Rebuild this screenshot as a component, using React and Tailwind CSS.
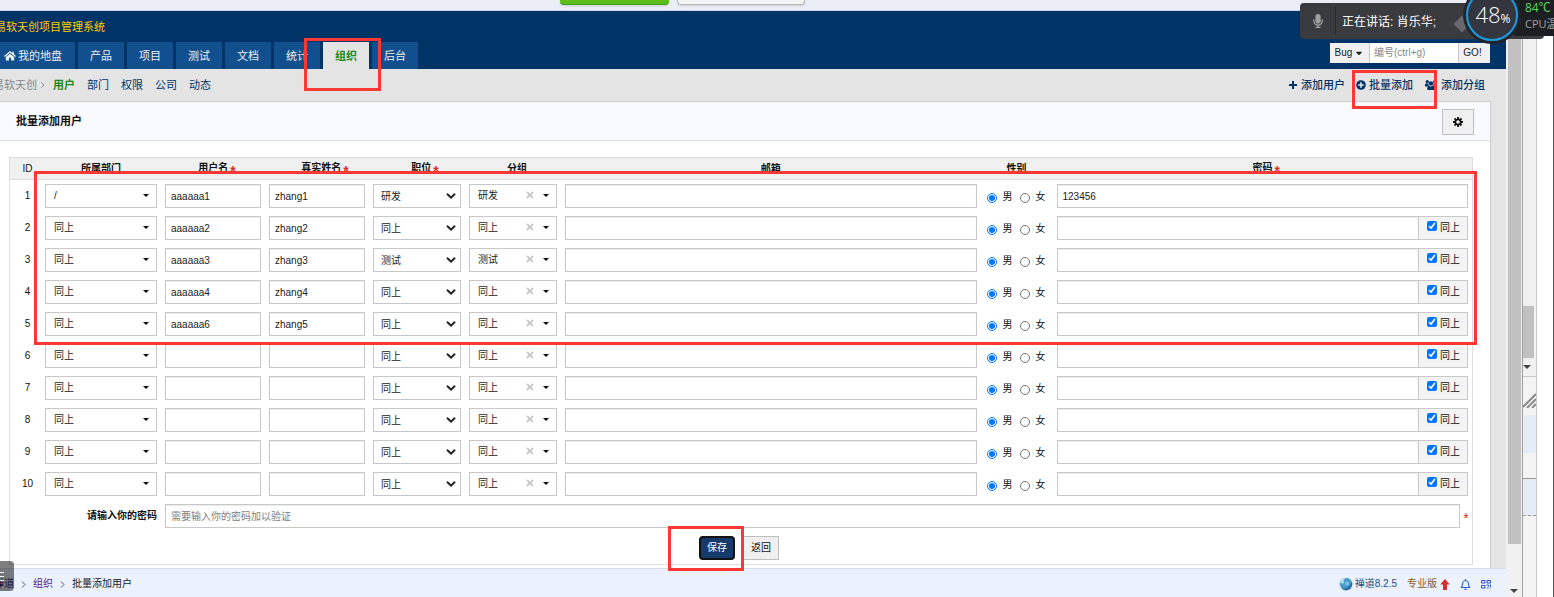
import React from 'react';
import { FaTimes, FaMicrophone, FaRegBell, FaCaretDown } from 'react-icons/fa';

const fontClass = "font-['Liberation_Sans','Noto_Sans_CJK_SC',sans-serif]";

const rows = [
  { id: 1, dept: '/', user: 'aaaaaa1', name: 'zhang1', role: '研发', group: '研发', password: '123456' },
  { id: 2, dept: '同上', user: 'aaaaaa2', name: 'zhang2', role: '同上', group: '同上' },
  { id: 3, dept: '同上', user: 'aaaaaa3', name: 'zhang3', role: '测试', group: '测试' },
  { id: 4, dept: '同上', user: 'aaaaaa4', name: 'zhang4', role: '同上', group: '同上' },
  { id: 5, dept: '同上', user: 'aaaaaa6', name: 'zhang5', role: '同上', group: '同上' },
  { id: 6, dept: '同上', user: '', name: '', role: '同上', group: '同上' },
  { id: 7, dept: '同上', user: '', name: '', role: '同上', group: '同上' },
  { id: 8, dept: '同上', user: '', name: '', role: '同上', group: '同上' },
  { id: 9, dept: '同上', user: '', name: '', role: '同上', group: '同上' },
  { id: 10, dept: '同上', user: '', name: '', role: '同上', group: '同上' },
];

const columns = [
  { label: 'ID', width: 'w-[31px] pl-1 font-normal' },
  { label: '所属部门', width: 'w-[120px] font-bold' },
  { label: '用户名', width: 'w-[104px] pl-2 font-bold', required: true },
  { label: '真实姓名', width: 'w-[104px] pl-4 font-bold', required: true },
  { label: '职位', width: 'w-[96px] pl-4 font-bold', required: true },
  { label: '分组', width: 'w-[96px] pl-2 font-bold' },
  { label: '邮箱', width: 'font-bold' },
  { label: '性别', width: 'w-[72px] font-bold' },
  { label: '密码', width: 'pl-2 font-bold', required: true },
];

const fieldClass =
  'block h-6 w-full min-w-0 border border-[#c8c8c8] bg-white px-[5px] text-[10px] leading-4 text-[#222] shadow-[inset_0_1px_1px_rgba(0,0,0,0.08)] outline-none placeholder:text-[#808080]';
const selectClass =
  'block h-6 w-full appearance-none border border-[#c8c8c8] bg-white text-[10px] leading-4 text-[#222] outline-none';

function Star() {
  return <span className="ml-0.5 inline-block pt-1 align-middle text-[14px] font-bold leading-3 text-[#d2322d]">*</span>;
}

function Caret() {
  return (
    <svg viewBox="0 0 6 3" className="h-[3px] w-1.5" fill="#111" aria-hidden="true">
      <path d="M0 0h6L3 3z" />
    </svg>
  );
}

function HomeIcon() {
  return (
    <svg viewBox="0 0 12 10" className="h-2.5 w-3" fill="currentColor" aria-hidden="true">
      <path d="M6 0 0 5l.8 1L6 1.800 11.200 6l.8-1-2-1.700V.8H8.500v1.300z" />
      <path d="M6 2.700 1.800 6v3.600h3.200V6.800h2v2.800h3.200V6z" />
    </svg>
  );
}

function PlusIcon() {
  return (
    <svg viewBox="0 0 8 8" className="size-2" stroke="currentColor" strokeWidth="2" aria-hidden="true">
      <path d="M4 0v8M0 4h8" />
    </svg>
  );
}

function PlusCircleIcon() {
  return (
    <svg viewBox="0 0 10 10" className="-mx-px size-[10px]" fill="none" aria-hidden="true">
      <circle cx="5" cy="5" r="4.800" fill="currentColor" />
      <path d="M5 2.200v5.600M2.200 5h5.600" stroke="#e4e4e4" strokeWidth="1.600" />
    </svg>
  );
}

function GroupIcon() {
  return (
    <svg viewBox="0 0 12 10" className="h-2.5 w-3" fill="currentColor" aria-hidden="true">
      <circle cx="2.300" cy="1.700" r="1.600" />
      <circle cx="9.700" cy="1.700" r="1.600" />
      <circle cx="6" cy="3.400" r="2.200" />
      <path d="M0 6V4.500Q0 3.400 1 3.400h2.300q0 1.500.9 2.200-1 .1-1.600.9H.8Q0 6.500 0 6zM12 6V4.500q0-1.100-1-1.100H8.700q0 1.500-.9 2.200 1 .1 1.600.9h1.800q.8 0 .8-.5z" />
      <path d="M2.200 8.800c0-2 .7-3 1.900-3 1.200.9 2.600.9 3.800 0 1.200 0 1.900 1 1.900 3 0 .8-.5 1.200-1.200 1.200H3.400c-.7 0-1.200-.4-1.200-1.200z" />
    </svg>
  );
}

function GearIcon() {
  return (
    <svg viewBox="0 0 10 10" className="size-[10px]" fill="none" stroke="#111" aria-hidden="true">
      <circle cx="5" cy="5" r="2.700" strokeWidth="1.800" />
      <path d="M5 0v2M5 8v2M0 5h2M8 5h2M1.500 1.500l1.300 1.300M7.200 7.200l1.300 1.300M8.500 1.500 7.200 2.800M2.800 7.200 1.500 8.500" strokeWidth="1.800" />
    </svg>
  );
}

function PickSelect({ label, value, clearable }) {
  return (
    <div className="relative">
      <select aria-label={label} defaultValue={value} className={selectClass + ' pl-2'}>
        <option>{value}</option>
      </select>
      <span className="pointer-events-none absolute right-2 top-0 flex h-[22px] items-center gap-2">
        {clearable && <FaTimes className="size-[10px] text-[#c4c4c4]" />}
        <Caret />
      </span>
    </div>
  );
}

function RoleSelect({ label, value }) {
  return (
    <div className="relative">
      <select aria-label={label} defaultValue={value} className={selectClass + ' pl-[7px] pt-px'}>
        <option>{value}</option>
      </select>
      <svg viewBox="0 0 10 6" className="pointer-events-none absolute right-[5px] top-[9px] h-1.5 w-2.5" fill="none" stroke="#222" strokeWidth="2" aria-hidden="true">
        <path d="M1 0.8 5 4.600 9 0.8" />
      </svg>
    </div>
  );
}

function UserRow({ row }) {
  return (
    <tr className="h-8">
      <td className="p-0 pl-1 text-center">{row.id}</td>
      <td className="p-1"><PickSelect label={'所属部门 ' + row.id} value={row.dept} /></td>
      <td className="p-1"><input aria-label={'用户名 ' + row.id} defaultValue={row.user} className={fieldClass} /></td>
      <td className="p-1"><input aria-label={'真实姓名 ' + row.id} defaultValue={row.name} className={fieldClass} /></td>
      <td className="p-1"><RoleSelect label={'职位 ' + row.id} value={row.role} /></td>
      <td className="p-1"><PickSelect label={'分组 ' + row.id} value={row.group} clearable /></td>
      <td className="p-1"><input type="email" aria-label={'邮箱 ' + row.id} className={fieldClass} /></td>
      <td className="p-0">
        <div className="flex h-6 items-center gap-[7px] pl-1.5 pt-0.5">
          <label className="flex items-center gap-1.5">
            <input type="radio" name={'gender' + row.id} defaultChecked className="mt-0.5 size-[10px]" />男
          </label>
          <label className="flex items-center gap-1.5">
            <input type="radio" name={'gender' + row.id} className="mt-0.5 size-[10px]" />女
          </label>
        </div>
      </td>
      <td className="p-1">
        <div className="flex">
          <input aria-label={'密码 ' + row.id} defaultValue={row.password || ''} className={fieldClass + ' flex-1'} />
          {row.id > 1 && (
            <label className="-ml-px flex h-6 w-[50px] shrink-0 items-center gap-[3px] border border-[#c8c8c8] bg-[#f4f4f4] pl-2">
              <input type="checkbox" defaultChecked className="mb-1 size-[10px]" />同上
            </label>
          )}
        </div>
      </td>
    </tr>
  );
}

function MainNav() {
  const tabs = ['产品', '项目', '测试', '文档', '统计', '组织', '后台'];
  return (
    <nav className="flex gap-[3px]">
      <a href="#my" className="flex h-[27px] w-[75px] items-center gap-0.5 bg-[#124f8e] pl-1 text-[#eee]">
        <HomeIcon />我的地盘
      </a>
      {tabs.map((tab) => (
        <a
          key={tab}
          href={'#' + tab}
          className={
            'flex h-[27px] items-center px-3 ' +
            (tab === '组织' ? 'bg-[#e4e4e4] font-bold text-[#1d8a1d]' : 'bg-[#124f8e] text-[#eee]')
          }
        >
          {tab}
        </a>
      ))}
    </nav>
  );
}

function SearchBox() {
  return (
    <form className="mb-1.5 mr-4 flex h-5 text-[10px] text-[#222]">
      <button type="button" className="flex w-10 items-center justify-center gap-0.5 border-r border-[#c8c8c8] bg-[#f0f0f0]">
        Bug<FaCaretDown className="size-2.5" />
      </button>
      <input aria-label="编号" placeholder="编号(ctrl+g)" className="w-[88px] bg-white px-1 outline-none placeholder:text-[#888]" />
      <button type="button" className="w-8 border-l border-[#c8c8c8] bg-[#f0f0f0] pr-1">GO!</button>
    </form>
  );
}

function SubNav() {
  return (
    <div className="flex h-8 items-center justify-between text-[11px] text-[#036]">
      <nav className="flex items-center gap-3">
        <span className="-ml-[7px] flex items-center gap-1 text-[#888]">
          易软天创
          <svg viewBox="0 0 4 6" className="h-1.5 w-1" fill="none" stroke="#888" aria-hidden="true"><path d="M.5.5 3 3 .5 5.500" /></svg>
        </span>
        <a href="#user" className="-ml-1 font-bold text-[#1d8a1d]">用户</a>
        <a href="#dept">部门</a>
        <a href="#priv">权限</a>
        <a href="#company">公司</a>
        <a href="#dynamic">动态</a>
      </nav>
      <div className="mr-[21px] flex items-center gap-3 font-medium">
        <a href="#add" className="flex items-center gap-1"><PlusIcon />添加用户</a>
        <a href="#batch" className="flex items-center gap-1"><PlusCircleIcon />批量添加</a>
        <a href="#group" className="flex items-center gap-1"><GroupIcon />添加分组</a>
      </div>
    </div>
  );
}

function Separator() {
  return (
    <svg viewBox="0 0 5 7" className="h-[7px] w-[5px]" fill="none" stroke="#555" aria-hidden="true"><path d="M1 .5 4 3.500 1 6.500" /></svg>
  );
}

function Footer() {
  return (
    <footer className="flex h-[29px] items-center justify-between border-t border-[#d8dde6] bg-[#ebf2fd] pt-0.5 text-[10px]">
      <nav className="flex items-center gap-[7px] text-[#222]">
        <a href="#zentao" className="-ml-1.5 text-[#3a1a6e]">禅道</a>
        <Separator />
        <a href="#org" className="text-[#551a8b]">组织</a>
        <Separator />
        <span>批量添加用户</span>
      </nav>
      <div className="mr-[15px] flex items-center gap-2.5 text-[#1a4f85]">
        <a href="#about" className="flex items-center gap-0.5">
          <svg viewBox="0 0 14 14" className="size-3.5" aria-hidden="true">
            <circle cx="7" cy="7" r="6.300" fill="#4a9bcb" />
            <path d="M1 5C2 2 5 .7 7.500.8 5 2 4 4 5 6c-1 1-3 .6-4-1z" fill="#b5dff0" />
            <path d="M3 11.500c4 .5 7-1.500 9.800-6.500 1.500 4-1.300 8.300-5.800 8.300-1.500 0-3-.8-4-1.800z" fill="#2671a8" />
            <circle cx="8" cy="6.500" r="2" fill="#7cc3e2" />
          </svg>
          禅道8.2.5
        </a>
        <a href="#pro" className="flex items-center gap-[3px] text-[#8a5a1c]">
          专业版
          <svg viewBox="0 0 10 11" className="h-[11px] w-2.5" fill="#d2322d" aria-hidden="true"><path d="M5 0 9.800 5.500H7V11H3V5.500H.2z" /></svg>
        </a>
        <button type="button" aria-label="通知"><FaRegBell className="size-[11px] text-[#2f5bd0]" /></button>
        <button type="button" aria-label="二维码">
          <svg viewBox="0 0 10 10" className="size-[10px]" fill="none" stroke="#2f4fd0" aria-hidden="true">
            <path d="M.5 1.500h3.500v2.500H.5zM6 1.500h3.500v2.500H6zM.5 6.500h3.500V9H.5zM5.500 6h2v1.500M9.500 5.500v2.500M6 9h1.500M8.500 9h1" />
          </svg>
        </button>
      </div>
    </footer>
  );
}

function DownArrow() {
  return <svg viewBox="0 0 8 4" className="h-1 w-2" fill="#444" aria-hidden="true"><path d="M0 0h8L4 4z" /></svg>;
}

function OuterStrip() {
  return (
    <div className="flex w-8 shrink-0 border-r border-[#555] bg-white">
      <div className="flex w-[15px] flex-col border-l border-r border-l-[#a0a0a0] border-r-[#c8c8c8] bg-[#f4f4f4]">
        <div className="h-[295px] bg-[#f1f1f1]" />
        <div className="mr-0.5 h-[52px] bg-[#c1c1c1]" />
        <div className="flex h-[18px] items-center bg-[#f1f1f1]"><DownArrow /></div>
        <div className="flex h-[39px] items-center border-t border-[#c8c8c8]">
          <svg viewBox="0 0 13 15" className="mt-2 h-[15px] w-[13px]" stroke="#8a8a8a" strokeWidth="2" aria-hidden="true">
            <path d="M0 14 13 1M4 15l9-9M9 15l4-4" />
          </svg>
        </div>
        <div className="h-[38px] bg-[#e3ecf7]" />
        <div className="h-[26px] border-b border-[#999]" />
        <div className="h-[37px] border-b border-dashed border-[#999] bg-[#e3ecf7]" />
      </div>
    </div>
  );
}

function MeetingWidget() {
  return (
    <div className="absolute right-0 top-0 h-[45px] w-[254px] overflow-hidden">
      <div className="absolute left-0 right-2.5 top-[3px] flex h-9 items-center rounded bg-[#3a3b3f] text-white">
        <span className="flex h-7 w-9 items-center justify-center border-r border-[#28292c]">
          <FaMicrophone className="size-3.5 text-[#a0a0a0]" />
        </span>
        <span className="pl-1.5 pt-0.5 text-[12px]">正在讲话: 肖乐华;</span>
      </div>
      <span className="absolute left-[156px] top-[18px] size-3 rotate-45 bg-[#66686c]" />
      <div className="absolute right-0 top-0 flex h-9 w-10 flex-col justify-between overflow-hidden bg-[#1d1e22] pb-1 pl-[11px] text-[12px] leading-4">
        <span className="whitespace-nowrap font-['Open_Sans','Noto_Sans_CJK_SC',sans-serif] text-[#5ad65a]">84℃</span>
        <span className="whitespace-nowrap font-['Open_Sans','Noto_Sans_CJK_SC',sans-serif] text-[11px] text-[#a0a0a0]">CPU温</span>
      </div>
      <svg viewBox="0 0 60 45" className="absolute left-[162px] top-0 h-[45px] w-[60px]" aria-hidden="true">
        <circle cx="30" cy="15" r="29" fill="#22242c" />
        <circle cx="30" cy="15" r="25" fill="#34363f" stroke="#1e9be0" strokeWidth="2" />
      </svg>
      <div className="absolute left-[169px] top-0.5 flex w-12 items-baseline justify-center font-['Open_Sans',sans-serif] text-[22px] font-light leading-6 text-white">
        48<span className="text-[12px] font-normal">%</span>
      </div>
    </div>
  );
}

export default function App() {
  return (
    <div className={'relative flex min-h-screen flex-col overflow-hidden bg-[#e4e4e4] text-[11px] leading-4 text-[#111] ' + fontClass}>
      <div className="flex h-[11px] items-start gap-2 overflow-hidden border-b border-[#d0d8e4] bg-[#ebeef7] pl-[560px]">
        <div className="h-[5px] w-[109px] rounded-b border-b border-[#3f9e14] bg-[#5fbd1a] shadow-sm" />
        <div className="h-[5px] w-[128px] rounded-b border border-t-0 border-[#b8b8b8] bg-[#f2f2f2] shadow-sm" />
      </div>

      <div className="flex flex-1">
        <div className="flex min-w-0 flex-1 flex-col">
          <header className="bg-[#036]">
            <h1 className="-ml-[5px] flex h-[31px] items-center text-[#fc0]">易软天创项目管理系统</h1>
            <div className="flex h-[27px] items-end justify-between">
              <MainNav />
              <SearchBox />
            </div>
          </header>
          <SubNav />

          <main className="mr-[15px] flex-1 border-r border-t border-[#cfcfcf] bg-white pb-[3px]">
            <div className="flex h-[39px] items-center justify-between border-b border-[#e2e2e2] bg-[#f8faff] px-4">
              <h2 className="font-bold">批量添加用户</h2>
              <button type="button" aria-label="设置" className="mt-0.5 flex h-[26px] w-8 items-center justify-center border border-[#bfbfbf] bg-[#f0f0f0]">
                <GearIcon />
              </button>
            </div>

            <div className="pl-[9px] pr-[17px] pt-4">
              <table className="w-full table-fixed border-separate border-spacing-0 border border-[#ddd] text-[10px] leading-4">
                <thead>
                  <tr className="h-[22px] bg-[#f0f0f0]">
                    {columns.map((column) => (
                      <th key={column.label} className={'whitespace-nowrap border-b border-[#ddd] py-0 pr-0 text-center leading-4 ' + column.width}>
                        {column.label}
                        {column.required && <Star />}
                      </th>
                    ))}
                  </tr>
                </thead>
                <tbody>
                  {rows.map((row) => <UserRow key={row.id} row={row} />)}
                  <tr className="h-8">
                    <th colSpan={2} className="p-1 text-right font-bold"><label htmlFor="verify">请输入你的密码</label></th>
                    <td colSpan={7} className="p-1 pr-0">
                      <div className="flex items-center">
                        <input id="verify" type="password" placeholder="需要输入你的密码加以验证" className={fieldClass + ' flex-1'} />
                        <span className="w-3 pt-1 text-center text-[14px] text-[#d2322d]">*</span>
                      </div>
                    </td>
                  </tr>
                  <tr className="h-8">
                    <td colSpan={9} className="p-0 pr-1">
                      <div className="flex items-center justify-center gap-2">
                        <span className="relative">
                          <button type="button" className="block h-6 w-9 rounded border-2 border-[#111] bg-[#14396a] text-white">保存</button>
                          <span className="pointer-events-none absolute -bottom-[11px] -left-[31px] -right-[9px] -top-[10px] border-[3px] border-[#fc3834]" />
                        </span>
                        <button type="button" className="h-6 w-9 border border-[#bfbfbf] bg-[#f0f0f0]">返回</button>
                      </div>
                    </td>
                  </tr>
                </tbody>
              </table>
            </div>
          </main>
          <Footer />
        </div>

        <div className="flex w-4 shrink-0 flex-col items-center bg-[#f1f1f1]">
          <div className="w-[13px] flex-1 bg-[#c1c1c1]" />
          <div className="flex h-[53px] items-end pb-1"><DownArrow /></div>
        </div>
        <OuterStrip />
      </div>

      <div className="pointer-events-none absolute left-[304px] top-[38px] h-[53px] w-[77px] border-[3px] border-[#fc3834]" />
      <div className="pointer-events-none absolute right-[117px] top-[70px] h-[39px] w-[85px] border-[3px] border-[#fc3834]" />
      <div className="pointer-events-none absolute left-[34px] right-[77px] top-[171px] h-[174px] border-[3px] border-[#fc3834]" />

      <button type="button" aria-label="菜单" className="absolute bottom-1.5 left-0 flex h-[30px] w-3.5 flex-col items-start justify-center gap-[3px] rounded-r bg-black/50">
        <span className="h-px w-1 bg-white" />
        <span className="h-px w-1 bg-white" />
        <span className="h-px w-1 bg-white" />
      </button>
      <MeetingWidget />
    </div>
  );
}
